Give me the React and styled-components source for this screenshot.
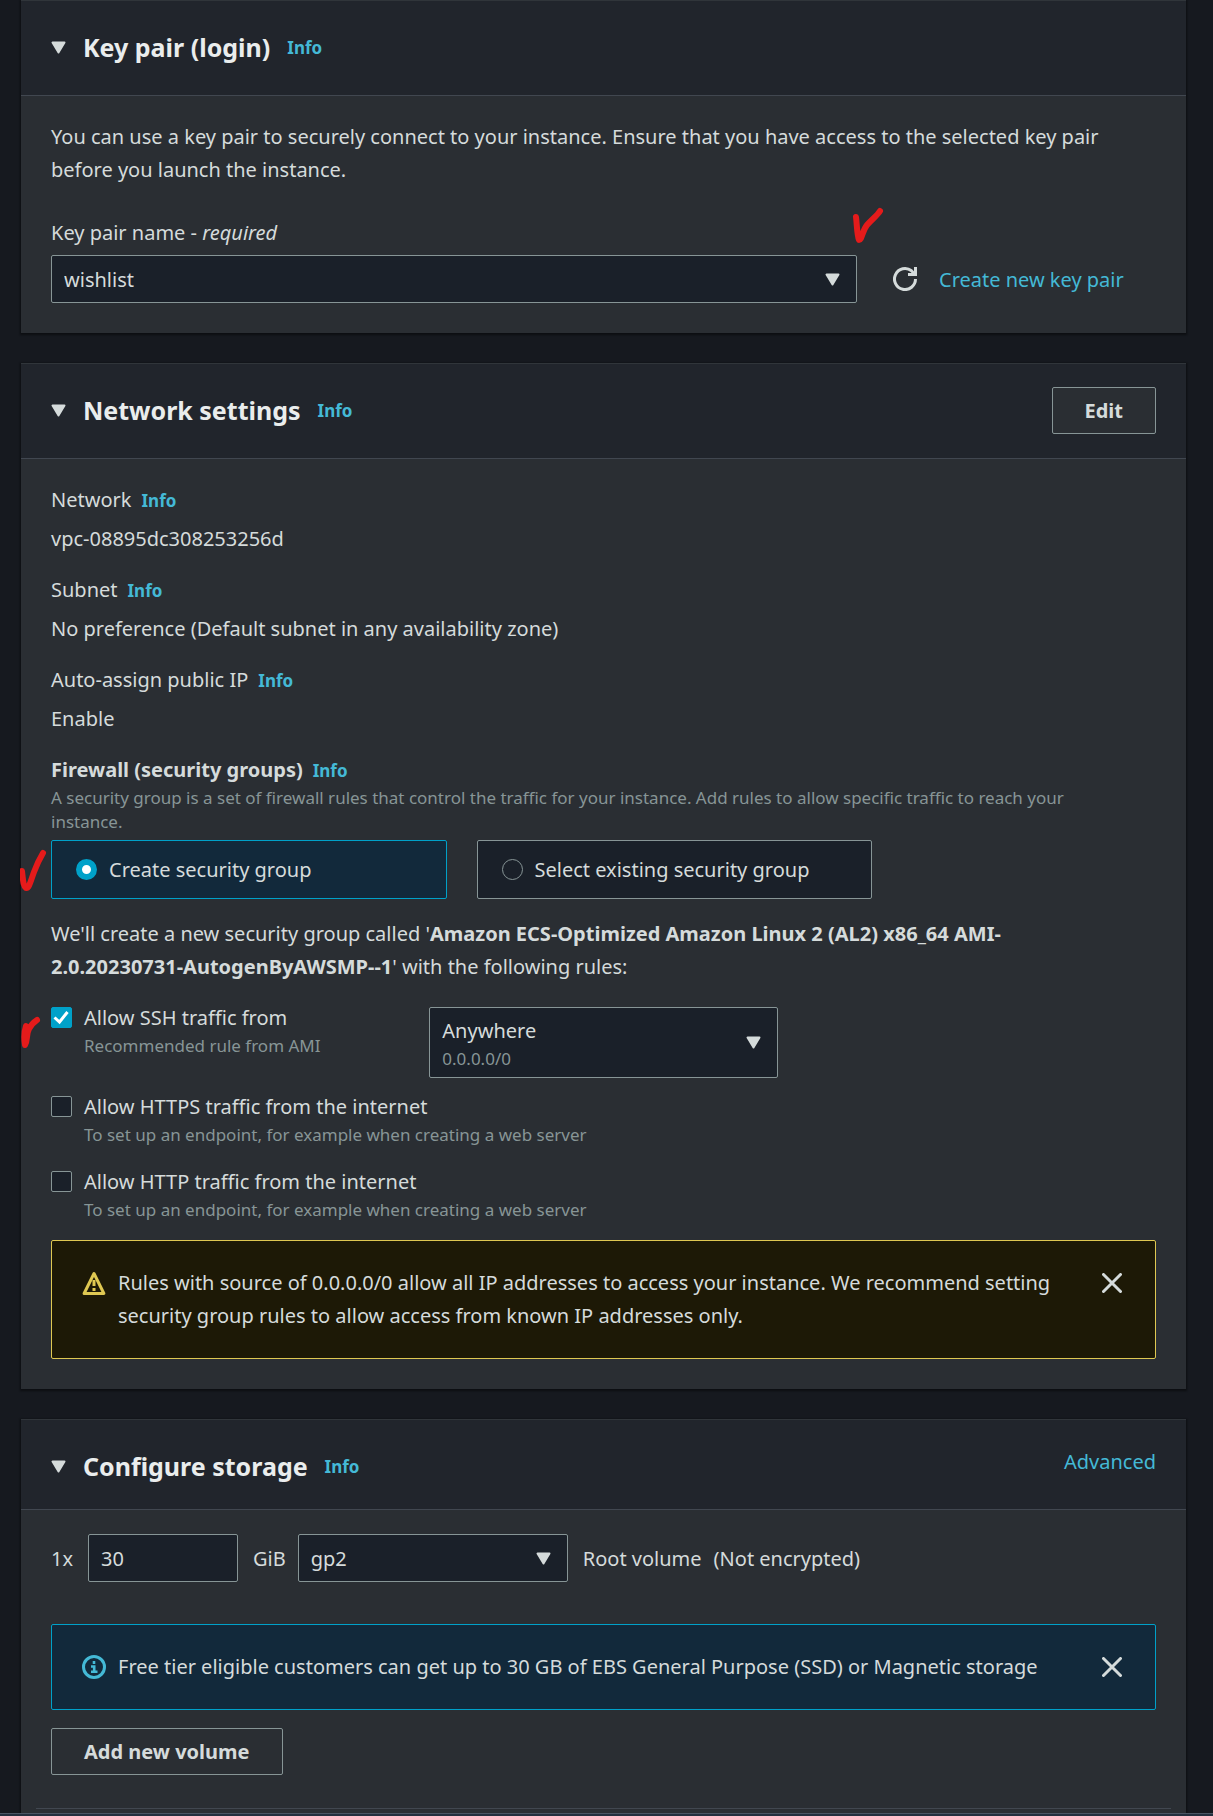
import React, { useState } from "react";
import styled, { createGlobalStyle, ThemeProvider } from "styled-components";

const theme = {
  page: "#16191f",
  card: "#2a2e33",
  header: "#21252c",
  control: "#1a2029",
  line: "#414750",
  border: "#879596",
  text: "#d5dbdb",
  heading: "#eaeded",
  muted: "#879596",
  link: "#44b9d6",
  accent: "#00a1c9",
  infoBg: "#12293b",
  warn: "#dfc852",
  warnBg: "#1d1906",
  mark: "#e51b1b",
  footer: "#232f3e",
};

const GlobalStyle = createGlobalStyle`
  *, *::before, *::after { box-sizing: border-box; }
  body {
    margin: 0;
    background: ${theme.page};
    color: ${theme.text};
    font: 400 20px/33px "Noto Sans", "Open Sans", sans-serif;
  }
  button, input, select { font: inherit; color: inherit; margin: 0; }
  p, h2, dl, dt, dd, fieldset, legend { margin: 0; padding: 0; border: 0; }
  a { color: ${theme.link}; text-decoration: none; }
`;

const Page = styled.main`
  position: relative;
  display: flex;
  flex-direction: column;
  gap: 30px;
  padding: 0 27px 0 21px;
`;

const Card = styled.section`
  background: ${(p) => p.theme.card};
  border-top: 1px solid #30353a;
  box-shadow: 0 1px 2px 1px rgba(0, 0, 0, 0.45);
`;

const CardHeader = styled.header`
  display: flex;
  align-items: flex-start;
  justify-content: space-between;
  padding: 23px 30px ${(p) => (p.$compact ? 19 : 24)}px;
  background: ${(p) => p.theme.header};
  border-bottom: 1px solid ${(p) => p.theme.line};
`;

const TitleGroup = styled.div`
  display: flex;
  align-items: baseline;
  gap: 17px;
  line-height: 47px;
`;

const Toggle = styled.button`
  display: flex;
  align-items: center;
  gap: 17px;
  padding: 0;
  border: 0;
  background: none;
  color: ${(p) => p.theme.heading};
  font-size: 25px;
  font-weight: 700;
  line-height: 47px;
`;

const InfoLink = styled.a`
  font-size: 17px;
  font-weight: 700;
  line-height: 24px;
`;

const HeaderLink = styled.a`
  line-height: 38px;
`;

const CardBody = styled.div`
  padding: 24px 30px ${(p) => (p.$last ? 0 : 30)}px;
`;

const Button = styled.button`
  height: 47px;
  padding: 0 32px;
  border: 1px solid ${(p) => p.theme.border};
  border-radius: 2px;
  background: ${(p) => p.theme.card};
  font-weight: 700;
  line-height: 44px;
`;

const Label = styled.label`
  display: block;
`;

const KeyField = styled.div`
  display: flex;
  flex-direction: column;
  gap: 6px;
  margin-top: 30px;
`;

const KeyRow = styled.div`
  display: grid;
  grid-template-columns: minmax(0, 1fr) 269px;
  align-items: center;
  gap: 30px;
`;

const KeyActions = styled.div`
  display: flex;
  align-items: center;
  gap: 22px;
`;

const IconButton = styled.button`
  display: flex;
  align-items: center;
  justify-content: center;
  height: 33px;
  padding: 0 0 0 ${(p) => (p.$inset ? 6 : 0)}px;
  border: 0;
  background: none;
`;

const SelectBox = styled.div`
  display: grid;
  align-items: center;
  width: ${(p) => p.$width || "auto"};
  height: ${(p) => (p.$tall ? 71 : 48)}px;
  border: 1px solid ${(p) => p.theme.border};
  border-radius: 2px;
  background: ${(p) => p.theme.control};

  > * { grid-area: 1 / 1; }
  > svg { justify-self: end; margin-right: 16px; pointer-events: none; }
`;

const NativeSelect = styled.select`
  appearance: none;
  width: 100%;
  height: 100%;
  padding: 0 44px ${(p) => (p.$tall ? 24 : 0)}px 12px;
  border: 0;
  background: none;
  outline-offset: 2px;

  option { background: ${(p) => p.theme.control}; }
`;

const SelectHint = styled.span`
  align-self: end;
  padding: 0 12px 6px;
  color: ${(p) => p.theme.muted};
  font-size: 17px;
  line-height: 24px;
  pointer-events: none;
`;

const Facts = styled.dl`
  display: flex;
  flex-direction: column;
  gap: 18px;
`;

const Fact = styled.div`
  display: flex;
  flex-direction: column;
  gap: 6px;
`;

const LabelLine = styled.div`
  display: flex;
  align-items: baseline;
  gap: 10px;
  font-weight: ${(p) => (p.$bold ? 700 : 400)};
`;

const Stack = styled.div`
  display: flex;
  flex-direction: column;
  gap: 18px;
`;

const Firewall = styled.fieldset`
  min-width: 0;
  margin-top: 18px;
`;

const FieldHint = styled.p`
  max-width: 1070px;
  color: ${(p) => p.theme.muted};
  font-size: 17px;
  line-height: 24px;
`;

const Summary = styled.p`
  max-width: 1070px;
`;

const Tiles = styled.div`
  display: grid;
  grid-template-columns: 1fr 1fr;
  gap: 30px;
  max-width: 821px;
  margin: 6px 0 18px;
`;

const Tile = styled.label`
  display: flex;
  align-items: center;
  gap: 12px;
  height: 59px;
  padding: 0 24px;
  border: 1px solid ${(p) => (p.$checked ? p.theme.accent : p.theme.border)};
  border-radius: 2px;
  background: ${(p) => (p.$checked ? p.theme.infoBg : p.theme.control)};
`;

const Radio = styled.input`
  appearance: none;
  flex: none;
  width: 21px;
  height: 21px;
  border: 1px solid ${(p) => p.theme.border};
  border-radius: 50%;

  &:checked {
    border: 6px solid ${(p) => p.theme.accent};
    background: #fff;
  }
`;

const Rules = styled.div`
  display: flex;
  flex-direction: column;
  gap: 18px;
  margin-top: 24px;
`;

const RuleRow = styled.div`
  display: grid;
  grid-template-columns: repeat(3, minmax(0, 1fr));
  gap: 30px;
`;

const RuleGroup = styled.div`
  display: flex;
  flex-direction: column;
  gap: 24px;
`;

const Rule = styled.div`
  display: grid;
  grid-template-columns: 21px minmax(0, 1fr);
  align-content: start;
  gap: 6px 12px;
  line-height: 21px;

  ${FieldHint} { grid-column: 2; }
`;

const CheckWrap = styled.span`
  display: grid;

  > * { grid-area: 1 / 1; }
  > svg { pointer-events: none; }
`;

const Checkbox = styled.input`
  appearance: none;
  width: 21px;
  height: 21px;
  border: 1px solid ${(p) => p.theme.border};
  border-radius: 2px;
  background: ${(p) => p.theme.control};

  &:checked {
    border-color: ${(p) => p.theme.accent};
    background: ${(p) => p.theme.accent};
  }
`;

const Notice = styled.div`
  display: grid;
  grid-template-columns: 24px minmax(0, 1fr) 26px;
  align-items: start;
  gap: 12px;
  padding: 25px 30px 26px;
  border: 1px solid ${(p) => (p.$warning ? p.theme.warn : p.theme.accent)};
  border-radius: 2px;
  background: ${(p) => (p.$warning ? p.theme.warnBg : p.theme.infoBg)};
`;

const NoticeIcon = styled.span`
  display: flex;
  align-items: center;
  height: 33px;
`;

const VolumeRow = styled.div`
  display: flex;
  align-items: center;
  height: 48px;
  gap: 15px;
  margin-bottom: 42px;
`;

const VolumeGroup = styled.div`
  display: flex;
  align-items: center;
  gap: 12px;
`;

const TextInput = styled.input`
  width: 150px;
  height: 48px;
  padding: 0 12px;
  border: 1px solid ${(p) => p.theme.border};
  border-radius: 2px;
  background: ${(p) => p.theme.control};
`;

const Divider = styled.hr`
  margin: 33px -15px 4px;
  border: 0;
  border-top: 1px solid ${(p) => p.theme.line};
`;

const FooterBar = styled.footer`
  position: relative;
  height: 3px;
  border-top: 1px solid #4a5563;
  background: ${(p) => p.theme.footer};
`;

const Marks = styled.svg`
  position: absolute;
  top: ${(p) => p.$top}px;
  left: ${(p) => p.$left}px;
  overflow: hidden;
  pointer-events: none;
  fill: none;
  stroke: ${(p) => p.theme.mark};
  stroke-width: 6;
  stroke-linecap: round;
  stroke-linejoin: round;
`;

const Caret = () => (
  <svg width="15" height="13" viewBox="0 0 15 13" aria-hidden="true">
    <path d="M1.5 1.5h12l-6 10z" fill={theme.text} stroke={theme.text} strokeWidth="2" strokeLinejoin="round" />
  </svg>
);

const RefreshIcon = () => (
  <svg width="24" height="24" viewBox="0 0 24 24" fill="none" stroke={theme.text} strokeWidth="3" aria-hidden="true">
    <path d="M22.5 12a10.5 10.5 0 1 1-4-8.2l3 3.2" />
    <path d="M22.5 0v7.5H15" />
  </svg>
);

const CloseIcon = () => (
  <svg width="20" height="20" viewBox="0 0 20 20" fill="none" stroke={theme.text} strokeWidth="3" strokeLinecap="round" aria-hidden="true">
    <path d="M1.5 1.5l17 17M18.5 1.5l-17 17" />
  </svg>
);

const WarningIcon = () => (
  <svg width="24" height="24" viewBox="0 0 24 24" fill="none" stroke={theme.warn} strokeWidth="3" aria-hidden="true">
    <path d="M12 2.5l9.9 20H2.1z" strokeLinejoin="round" />
    <path d="M12 9v6M12 17v3" />
  </svg>
);

const InfoIcon = () => (
  <svg width="24" height="24" viewBox="0 0 24 24" fill="none" stroke={theme.link} strokeWidth="3" aria-hidden="true">
    <circle cx="12" cy="12" r="10.5" />
    <path d="M12 6v3M9 11.5h3.2v5M9 16.8h6.5" strokeWidth="2.6" />
  </svg>
);

const CheckIcon = () => (
  <svg width="21" height="21" viewBox="0 0 21 21" fill="none" stroke="#fff" strokeWidth="3" aria-hidden="true">
    <path d="M3.5 10.5l5 4.5 8-10" />
  </svg>
);

function Info() {
  return <InfoLink href="#info">Info</InfoLink>;
}

function SectionHeader({ title, compact, children }) {
  return (
    <CardHeader $compact={compact}>
      <TitleGroup>
        <h2>
          <Toggle type="button" aria-expanded="true">
            <Caret />
            {title}
          </Toggle>
        </h2>
        <Info />
      </TitleGroup>
      {children}
    </CardHeader>
  );
}

function Select({ id, label, value, hint, width }) {
  return (
    <SelectBox $tall={Boolean(hint)} $width={width}>
      <NativeSelect id={id} aria-label={label} $tall={Boolean(hint)} defaultValue={value}>
        <option value={value}>{value}</option>
      </NativeSelect>
      {hint && <SelectHint>{hint}</SelectHint>}
      <Caret />
    </SelectBox>
  );
}

function TrafficRule({ id, label, hint, initial = false }) {
  const [checked, setChecked] = useState(initial);
  return (
    <Rule>
      <CheckWrap>
        <Checkbox
          type="checkbox"
          id={id}
          checked={checked}
          aria-describedby={`${id}-hint`}
          onChange={(e) => setChecked(e.target.checked)}
        />
        {checked && <CheckIcon />}
      </CheckWrap>
      <Label htmlFor={id}>{label}</Label>
      <FieldHint id={`${id}-hint`}>{hint}</FieldHint>
    </Rule>
  );
}

function Alert({ warning, children }) {
  return (
    <Notice $warning={warning} role="status">
      <NoticeIcon>{warning ? <WarningIcon /> : <InfoIcon />}</NoticeIcon>
      <p>{children}</p>
      <IconButton type="button" aria-label="Dismiss">
        <CloseIcon />
      </IconButton>
    </Notice>
  );
}

const facts = [
  ["Network", "vpc-08895dc308253256d"],
  ["Subnet", "No preference (Default subnet in any availability zone)"],
  ["Auto-assign public IP", "Enable"],
];

const groupChoices = [
  ["create", "Create security group"],
  ["existing", "Select existing security group"],
];

export default function App() {
  const [group, setGroup] = useState("create");

  return (
    <ThemeProvider theme={theme}>
      <GlobalStyle />
      <Page>
        <Card>
          <SectionHeader title="Key pair (login)" />
          <CardBody>
            <p>
              You can use a key pair to securely connect to your instance. Ensure that you have access to the
              selected key pair before you launch the instance.
            </p>
            <KeyField>
              <Label htmlFor="key-pair">
                Key pair name - <em>required</em>
              </Label>
              <KeyRow>
                <Select id="key-pair" value="wishlist" />
                <KeyActions>
                  <IconButton type="button" aria-label="Refresh key pairs" $inset>
                    <RefreshIcon />
                  </IconButton>
                  <a href="#create-key-pair">Create new key pair</a>
                </KeyActions>
              </KeyRow>
            </KeyField>
          </CardBody>
        </Card>

        <Card>
          <SectionHeader title="Network settings">
            <Button type="button">Edit</Button>
          </SectionHeader>
          <CardBody>
            <Facts>
              {facts.map(([name, value]) => (
                <Fact key={name}>
                  <dt>
                    <LabelLine>
                      {name}
                      <Info />
                    </LabelLine>
                  </dt>
                  <dd>{value}</dd>
                </Fact>
              ))}
            </Facts>

            <Firewall aria-label="Firewall (security groups)">
              <LabelLine $bold>
                Firewall (security groups)
                <Info />
              </LabelLine>
              <FieldHint>
                A security group is a set of firewall rules that control the traffic for your instance. Add rules to
                allow specific traffic to reach your instance.
              </FieldHint>
              <Tiles>
                {groupChoices.map(([value, label]) => (
                  <Tile key={value} $checked={group === value}>
                    <Radio
                      type="radio"
                      name="security-group"
                      checked={group === value}
                      onChange={() => setGroup(value)}
                    />
                    {label}
                  </Tile>
                ))}
              </Tiles>
            </Firewall>

            <Summary>
              We'll create a new security group called '
              <strong>Amazon ECS-Optimized Amazon Linux 2 (AL2) x86_64 AMI-2.0.20230731-AutogenByAWSMP--1</strong>' with
              the following rules:
            </Summary>

            <Rules>
              <RuleRow>
                <TrafficRule id="ssh" label="Allow SSH traffic from" hint="Recommended rule from AMI" initial />
                <Select id="ssh-source" label="SSH source" value="Anywhere" hint="0.0.0.0/0" />
              </RuleRow>
              <RuleGroup>
                <TrafficRule
                  id="https"
                  label="Allow HTTPS traffic from the internet"
                  hint="To set up an endpoint, for example when creating a web server"
                />
                <TrafficRule
                  id="http"
                  label="Allow HTTP traffic from the internet"
                  hint="To set up an endpoint, for example when creating a web server"
                />
              </RuleGroup>
              <Alert warning>
                Rules with source of 0.0.0.0/0 allow all IP addresses to access your instance. We recommend setting
                security group rules to allow access from known IP addresses only.
              </Alert>
            </Rules>
          </CardBody>
        </Card>

        <Card>
          <SectionHeader title="Configure storage" compact>
            <HeaderLink href="#advanced">Advanced</HeaderLink>
          </SectionHeader>
          <CardBody $last>
            <VolumeRow>
              <span>1x</span>
              <TextInput id="volume-size" defaultValue="30" inputMode="numeric" />
              <VolumeGroup>
                <label htmlFor="volume-size">GiB</label>
                <Select id="volume-type" label="Volume type" value="gp2" width="270px" />
              </VolumeGroup>
              <VolumeGroup>
                <span>Root volume</span>
                <span>(Not encrypted)</span>
              </VolumeGroup>
            </VolumeRow>
            <Stack>
              <Alert>
                Free tier eligible customers can get up to 30 GB of EBS General Purpose (SSD) or Magnetic storage
              </Alert>
              <div>
                <Button type="button">Add new volume</Button>
              </div>
            </Stack>
            <Divider />
          </CardBody>
        </Card>

        <Marks $top={205} $left={850} width="40" height="45" viewBox="850 205 40 45" aria-hidden="true">
          <path d="M856 217C857 225 857 235 859 240C862 240 862 231 867 225C872 219 877 216 880 211" />
        </Marks>
        <Marks $top={845} $left={20} width="35" height="55" viewBox="20 845 35 55" aria-hidden="true">
          <path d="M22 871C23 879 23 886 26 888C29 889 31 880 34 872C37 864 40 858 43 853" />
        </Marks>
        <Marks $top={1010} $left={21} width="30" height="45" viewBox="21 1010 30 45" aria-hidden="true">
          <path d="M26 1026C24 1032 24 1039 25 1045C28 1040 26 1034 29 1029C31 1025 34 1022 37 1020" />
        </Marks>
      </Page>
      <FooterBar />
    </ThemeProvider>
  );
}
